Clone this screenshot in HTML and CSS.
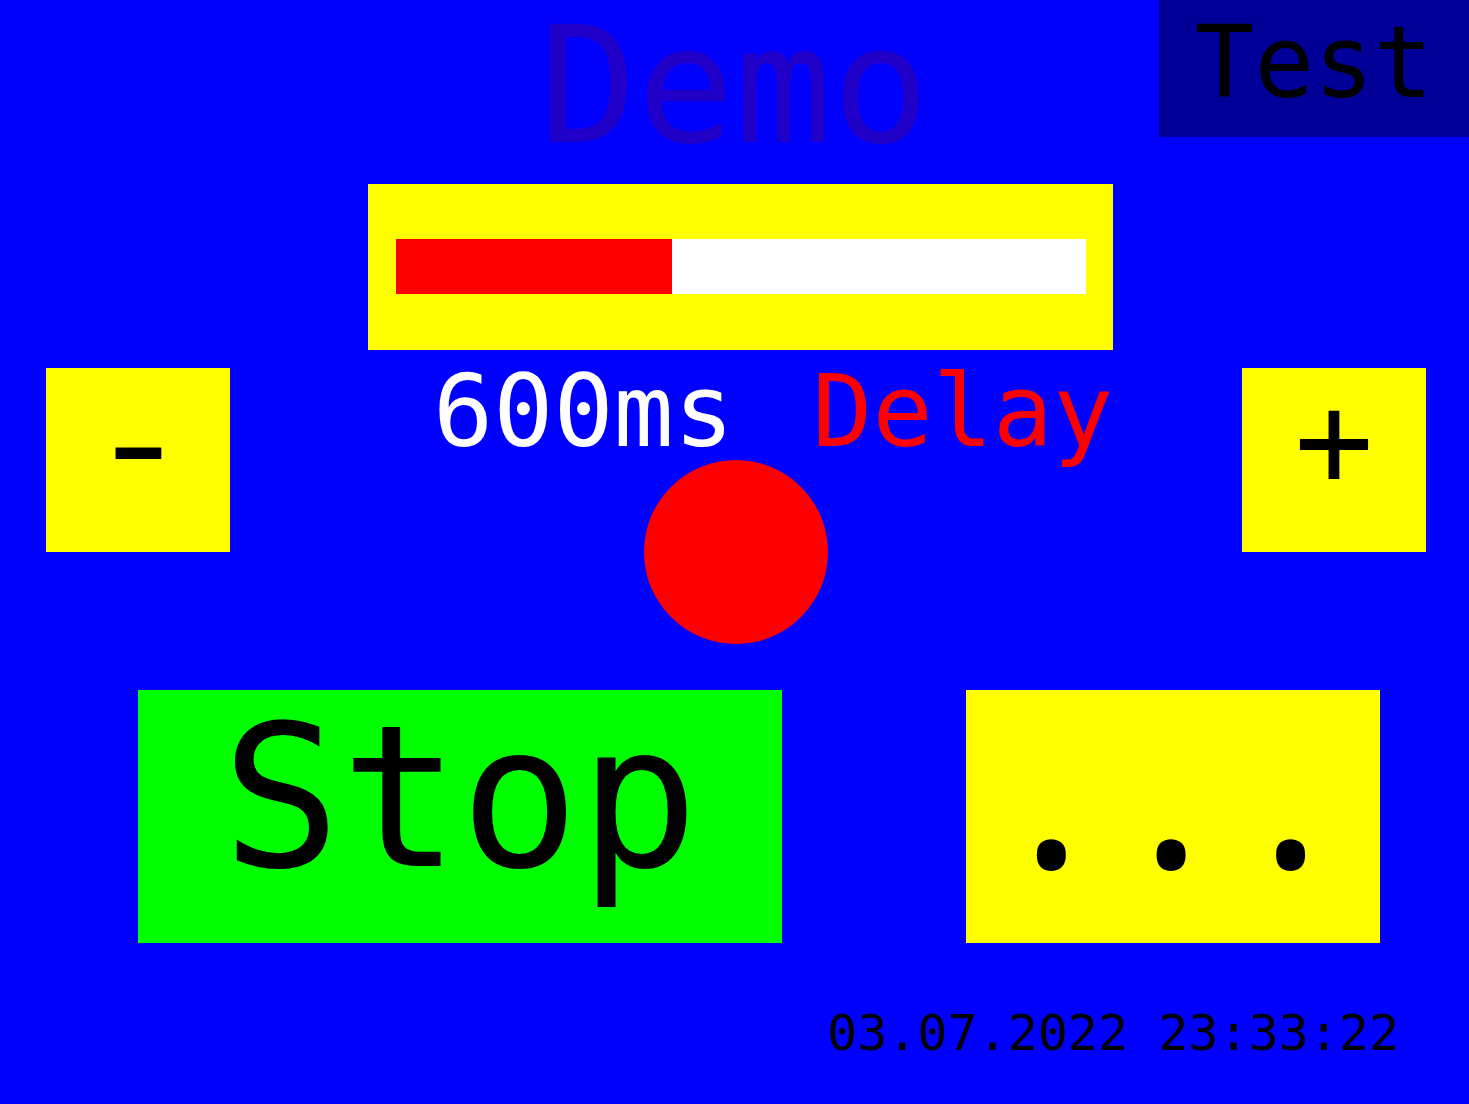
FILE: index.html
```html
<!DOCTYPE html>
<html lang="en">
<head>
<meta charset="utf-8">
<title>Demo</title>
<link rel="stylesheet" href="styles.css">
</head>
<body>
<div class="screen">
  <header class="top">
    <div class="top-spacer"></div>
    <h1 class="title">Demo</h1>
    <div class="test">Test</div>
  </header>

  <div class="progress">
    <div class="track"><div class="fill" style="width:40%"></div></div>
  </div>

  <div class="controls">
    <button class="sq minus"><span class="minus-glyph">-</span></button>
    <div class="center">
      <div class="label"><span class="value">600ms</span> <span class="name">Delay</span></div>
      <div class="led"></div>
    </div>
    <button class="sq plus">+</button>
  </div>

  <div class="actions">
    <button class="big stop">Stop</button>
    <button class="big more">...</button>
  </div>

  <div class="date">03.07.2022 23:33:22</div>
</div>
</body>
</html>
```

FILE: styles.css
```css
html, body {
  margin: 0;
  padding: 0;
  background: #0000ff;
}

body {
  font-family: "DejaVu Sans Mono", monospace;
  overflow: hidden;
}

.screen {
  width: 1469px;
  height: 1104px;
  display: flex;
  flex-direction: column;
  background: #0000ff;
}

/* header */
.top {
  display: grid;
  grid-template-columns: 1fr auto 1fr;
  grid-template-rows: 168px;
  align-items: start;
}

.title {
  margin: -8px 0 0 0;
  font-size: 162px;
  font-weight: normal;
  line-height: normal;
  color: #2000c8;
}

.test {
  justify-self: end;
  width: 310px;
  height: 137px;
  box-sizing: border-box;
  padding-bottom: 12px;
  background: #000099;
  color: #000;
  font-size: 99px;
  line-height: 125px;
  text-align: center;
}

/* progress */
.progress {
  margin-top: 16px;
  margin-left: 368px;
  width: 745px;
  height: 166px;
  box-sizing: border-box;
  padding: 55px 27px 56px 28px;
  background: #ffff00;
}

.track {
  height: 55px;
  background: #ffffff;
  display: flex;
}

.fill {
  height: 100%;
  background: #ff0000;
}

/* middle controls */
.controls {
  display: flex;
  align-items: flex-start;
  padding: 0 43px 0 46px;
}

.sq {
  appearance: none;
  border: 0;
  margin: 18px 0 0 0;
  width: 184px;
  height: 184px;
  box-sizing: border-box;
  background: #ffff00;
  color: #000;
  font-family: "DejaVu Sans Mono", monospace;
  text-align: center;
}

.minus {
  padding: 3px 0 37px 0;
  font-size: 144px;
  line-height: 144px;
}

.minus-glyph {
  display: inline-block;
  transform: scaleX(1.25);
}

.plus {
  padding: 6px 0 46px 0;
  font-size: 132px;
  line-height: 132px;
}

.center {
  flex: 1;
  display: flex;
  flex-direction: column;
  align-items: center;
}

.label {
  align-self: flex-start;
  padding-left: 203px;
  padding-top: 14px;
  height: 96px;
  font-size: 100px;
  line-height: 96px;
  white-space: pre;
}

.value { color: #ffffff; }
.name { color: #ff0000; margin-left: 18px; }

.led {
  width: 184px;
  height: 184px;
  border-radius: 50%;
  background: #ff0000;
}

/* big buttons */
.actions {
  display: flex;
  margin-top: 46px;
  padding-left: 138px;
  gap: 184px;
}

.big {
  appearance: none;
  border: 0;
  margin: 0;
  height: 253px;
  box-sizing: border-box;
  color: #000;
  text-align: center;
}

.stop {
  width: 644px;
  padding: 0 0 38px 0;
  background: #00ff00;
  font-family: "DejaVu Sans Mono", monospace;
  font-size: 198px;
  line-height: 215px;
}

.more {
  width: 414px;
  padding: 0 0 91px 50px;
  background: #ffff00;
  font-family: "Open Sans", "DejaVu Sans", sans-serif;
  font-size: 250px;
  line-height: 162px;
  letter-spacing: 54px;
}

/* date */
.date {
  margin-top: 61px;
  padding-right: 70px;
  text-align: right;
  color: #000;
  font-size: 50px;
  line-height: normal;
}
```
